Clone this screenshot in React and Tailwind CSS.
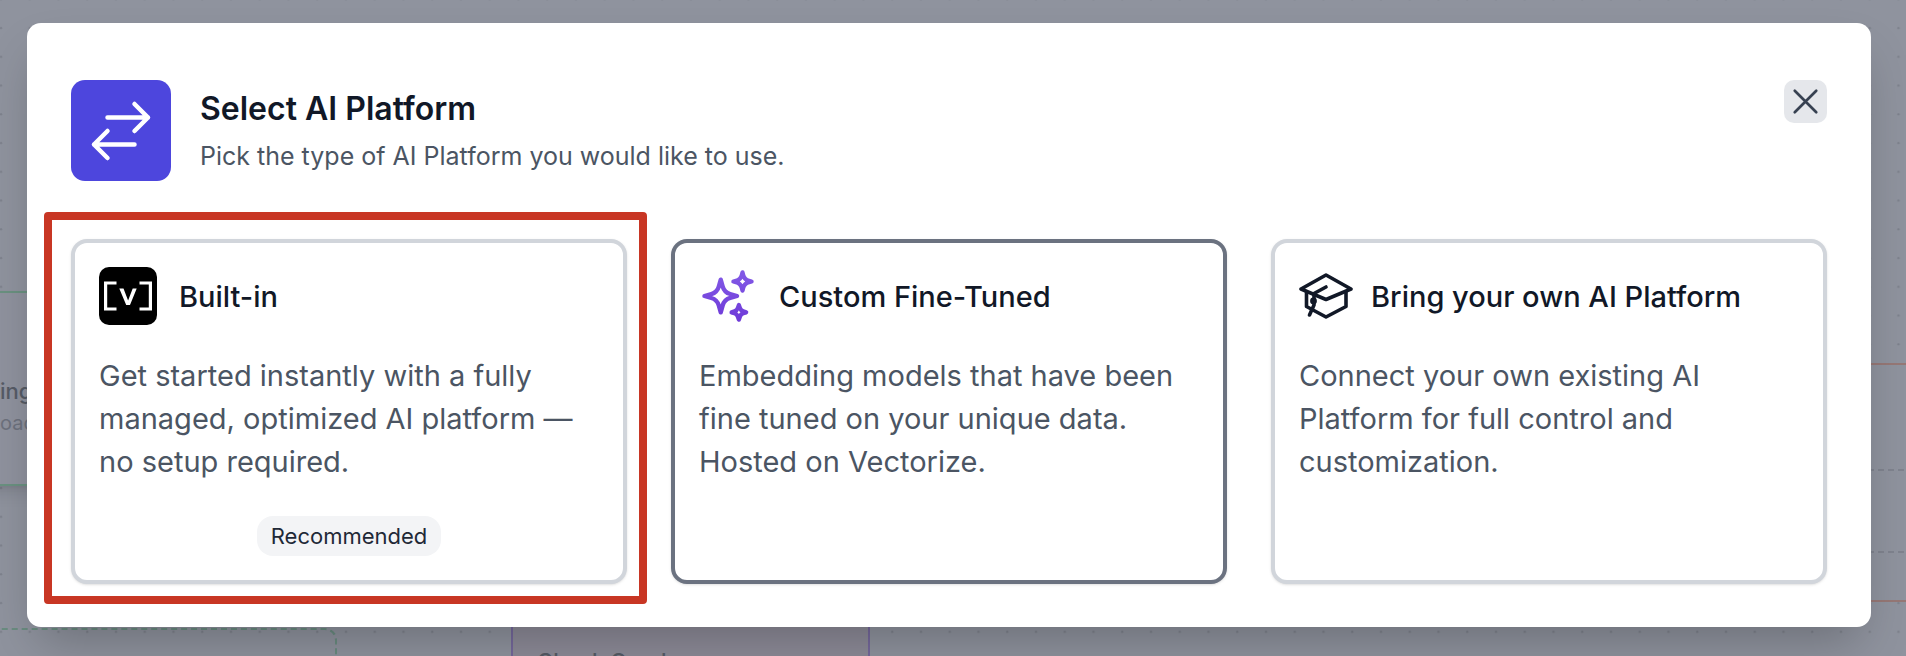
import React from "react";
import { HiOutlineArrowsRightLeft, HiOutlineXMark } from "react-icons/hi2";

function CapIcon() {
  return (
    <svg viewBox="0 0 54 46" className="h-[46px] w-[54px] shrink-0 text-[#111827]" fill="none" stroke="currentColor" strokeWidth="3.6" strokeLinejoin="round" strokeLinecap="round" aria-hidden="true">
      <path d="M2 16 27 2 52 16 27 26.500Z" />
      <path d="M7.500 18.500V33.500L27 44 47 33.500V18.500" />
      <path d="M27 14 15 20.500V32L10.500 42" />
      <circle cx="14.500" cy="28" r="1.600" fill="currentColor" />
    </svg>
  );
}

function BuiltInLogo() {
  return (
    <svg viewBox="0 0 58 58" className="size-[58px] shrink-0" aria-hidden="true">
      <rect width="58" height="58" rx="10" fill="#000" />
      <path d="M17.500 16H6.600V42H17.500M40.500 16H51.400V42H40.500" fill="none" stroke="#fff" strokeWidth="3.2" />
      <path d="M20.300 21.500H24.500L29.100 33.400 33.700 21.500H37.700L31 38H27.200Z" fill="#fff" />
    </svg>
  );
}

function SparklesIcon() {
  return (
    <svg viewBox="0 0 24 24" className="size-[58px] shrink-0" fill="none" stroke="url(#sparkle)" strokeWidth="1.8" strokeLinecap="round" strokeLinejoin="round" aria-hidden="true">
      <defs>
        <linearGradient id="sparkle" x1="0" y1="2" x2="0" y2="22" gradientUnits="userSpaceOnUse">
          <stop offset="0" stopColor="#8259e6" />
          <stop offset="1" stopColor="#6f3bd8" />
        </linearGradient>
      </defs>
      <path d="M9.813 15.904 9 18.750l-.813-2.846a4.500 4.500 0 0 0-3.090-3.090L2.250 12l2.846-.813a4.500 4.500 0 0 0 3.090-3.090L9 5.250l.813 2.846a4.500 4.500 0 0 0 3.090 3.090L15.750 12l-2.846.813a4.500 4.500 0 0 0-3.090 3.090Z" />
      <path d="M18.259 8.715 18 9.750l-.259-1.035a3.375 3.375 0 0 0-2.455-2.456L14.250 6l1.036-.259a3.375 3.375 0 0 0 2.455-2.456L18 2.250l.259 1.035a3.375 3.375 0 0 0 2.456 2.456L21.750 6l-1.035.259a3.375 3.375 0 0 0-2.456 2.456Z" />
      <path d="M16.894 20.567 16.500 21.750l-.394-1.183a2.250 2.250 0 0 0-1.423-1.423L13.500 18.750l1.183-.394a2.250 2.250 0 0 0 1.423-1.423l.394-1.183.394 1.183a2.250 2.250 0 0 0 1.423 1.423l1.183.394-1.183.394a2.250 2.250 0 0 0-1.423 1.423Z" />
    </svg>
  );
}

function PlatformCard({ icon, title, titleGap, border, text, badge }) {
  return (
    <button type="button" className={"flex w-full flex-col rounded-2xl border-4 bg-white p-6 text-left shadow " + border}>
      <span className={"flex h-[58px] items-center " + titleGap}>
        {icon}
        <span className="text-[29px] leading-[43px] font-medium text-[#111827]">{title}</span>
      </span>
      <span className="mt-[29px] text-[29px] leading-[43px] text-[#4b5563]">{text}</span>
      {badge && (
        <span className="mt-[33px] self-center rounded-2xl bg-[#f3f4f6] px-[14px] py-1 text-[22px] leading-8 text-[#1f2937]">{badge}</span>
      )}
    </button>
  );
}

function Backdrop() {
  return (
    <div className="absolute inset-0 overflow-hidden bg-[#8f939e]" aria-hidden="true">
      <svg className="absolute inset-0 h-full w-full">
        <defs>
          <pattern id="dots" x="-14" y="13" width="28.750" height="28.750" patternUnits="userSpaceOnUse">
            <circle cx="15" cy="15" r="1.200" fill="#7d818c" />
          </pattern>
        </defs>
        <rect width="100%" height="100%" fill="url(#dots)" />
      </svg>
      <div className="absolute top-[291px] -left-20 h-[195px] w-60 border-2 border-[#6a9180] bg-[#8f929e] shadow-lg">
        <p className="absolute top-[82px] left-[78px] text-[22px] font-medium text-[#565b66]">ing</p>
        <p className="absolute top-[115px] left-[78px] text-[20px] text-[#6d717d]">oad</p>
      </div>
      <div className="absolute top-[628px] -left-20 h-40 w-[417px] rounded-xl border-2 border-dashed border-[#6a8c80]" />
      <div className="absolute top-[500px] left-[511px] h-60 w-[359px] border-2 border-[#75689c] bg-[#8d8b98]">
        <p className="absolute top-[143px] left-6 text-[22px] font-medium text-[#565b66]">Check Graph</p>
      </div>
      <div className="absolute top-[363px] -right-5 h-[239px] w-60 border-2 border-[#967876] bg-[#8f939e]">
        <div className="mt-[104px] h-[84px] border-y-2 border-dashed border-[#7f838e]" />
      </div>
    </div>
  );
}

export default function App() {
  return (
    <div className="relative min-h-screen overflow-hidden px-[27px] pt-[23px] pb-[29px] font-[Inter,sans-serif]">
      <Backdrop />
      <div role="dialog" aria-labelledby="dialog-title" className="relative mr-2 rounded-[14px] bg-white px-11 pt-[57px] pb-[43px] shadow-2xl">
        <header className="flex items-start">
          <div className="flex h-[101px] w-[100px] items-center justify-center rounded-[14px] bg-[#4d46dd] text-white">
            <HiOutlineArrowsRightLeft className="size-[72px]" aria-hidden="true" />
          </div>
          <div className="ml-[29px] flex-1 pt-1">
            <h1 id="dialog-title" className="text-[32px] leading-[50px] font-semibold text-[#111827]">Select AI Platform</h1>
            <p className="mt-1 text-[25px] leading-9 text-[#4b5563]">Pick the type of AI Platform you would like to use.</p>
          </div>
          <button type="button" aria-label="Close" className="flex size-[43px] items-center justify-center rounded-[10px] bg-[#e5e7eb] text-[#374151]">
            <HiOutlineXMark className="size-[43px]" aria-hidden="true" />
          </button>
        </header>
        <div className="mt-[58px] grid min-h-[345px] grid-cols-3 gap-11">
          <div className="relative flex">
            <PlatformCard
              icon={<BuiltInLogo />}
              title="Built-in"
              titleGap="gap-[22px]"
              border="border-[#d1d5db]"
              text="Get started instantly with a fully managed, optimized AI platform — no setup required."
              badge="Recommended"
            />
            <div className="pointer-events-none absolute -top-[27px] -right-5 -bottom-5 -left-[27px] rounded border-8 border-[#c83624]" />
          </div>
          <PlatformCard
            icon={<SparklesIcon />}
            title="Custom Fine-Tuned"
            titleGap="gap-[22px]"
            border="border-[#6b7280]"
            text="Embedding models that have been fine tuned on your unique data. Hosted on Vectorize."
          />
          <PlatformCard
            icon={<CapIcon />}
            title="Bring your own AI Platform"
            titleGap="gap-[18px]"
            border="border-[#d1d5db]"
            text="Connect your own existing AI Platform for full control and customization."
          />
        </div>
      </div>
    </div>
  );
}
